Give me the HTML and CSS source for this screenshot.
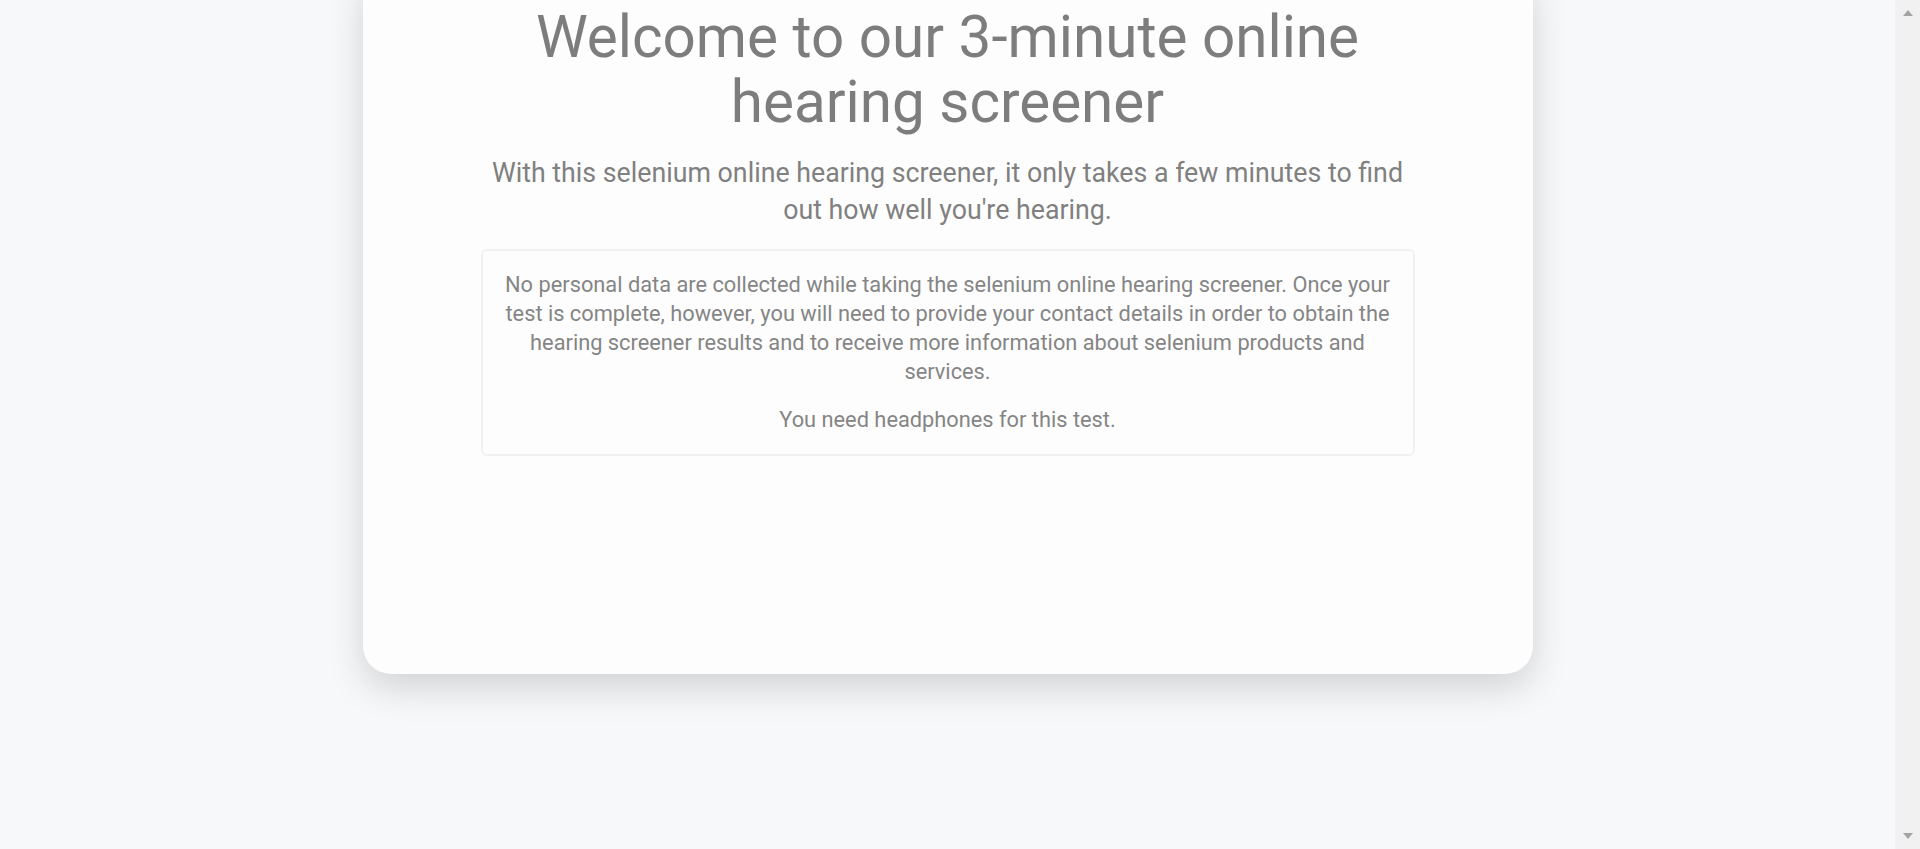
FILE: index.html
```html
<!DOCTYPE html>
<html lang="en">
<head>
<meta charset="utf-8">
<title>Online hearing screener</title>
<link rel="stylesheet" href="styles.css">
</head>
<body>
<div class="page">
  <div class="viewport">
    <main class="card">
      <div class="content">
        <h1 class="title">Welcome to our 3-minute online hearing screener</h1>
        <p class="subtitle">With this selenium online hearing screener, it only takes a few minutes to find out how well you're hearing.</p>
        <div class="notice">
          <p>No personal data are collected while taking the selenium online hearing screener. Once your test is complete, however, you will need to provide your contact details in order to obtain the hearing screener results and to receive more information about selenium products and services.</p>
          <p>You need headphones for this test.</p>
        </div>
      </div>
    </main>
  </div>
  <div class="scrollbar" aria-hidden="true">
    <span class="arrow arrow-up"></span>
    <span class="arrow arrow-down"></span>
  </div>
</div>
</body>
</html>
```
FILE: styles.css
```css
html,
body {
  margin: 0;
  height: 100%;
  overflow: hidden;
  background: #f7f8fa;
}
body {
  font-family: Roboto, "Liberation Sans", Arial, sans-serif;
  color: #808080;
}
.page {
  display: flex;
  height: 100vh;
}
.viewport {
  flex: 1;
  min-width: 0;
  overflow: hidden;
  background: #f7f8fa;
}
.scrollbar {
  width: 25px;
  flex: none;
  background: #f1f1f1;
  display: flex;
  flex-direction: column;
  justify-content: space-between;
  align-items: center;
  padding: 10px 0;
  box-sizing: border-box;
}
.arrow {
  width: 0;
  height: 0;
  border-left: 5.5px solid transparent;
  border-right: 5.5px solid transparent;
}
.arrow-up {
  border-bottom: 6px solid #a3a3a3;
}
.arrow-down {
  border-top: 6px solid #a3a3a3;
}
.card {
  width: 1170px;
  box-sizing: border-box;
  margin: -36px auto 0;
  padding: 41px 0 218px;
  background: #fdfdfd;
  border-radius: 28px;
  box-shadow: 0 14px 36px rgba(0, 0, 0, 0.15);
}
.content {
  width: 934px;
  margin: 0 auto;
  text-align: center;
}
.title {
  margin: 0;
  font-size: 58.4px;
  line-height: 65px;
  font-weight: 400;
  color: #7d7d7d;
}
.subtitle {
  margin: 20px 0 0;
  font-size: 26.75px;
  line-height: 37px;
  color: #808080;
}
.notice {
  margin-top: 20px;
  border: 2px solid #f1f1f1;
  border-radius: 6px;
  padding: 19px 18px 20px;
  font-size: 21.8px;
  line-height: 29px;
  color: #858585;
}
.notice p {
  margin: 0;
}
.notice p + p {
  margin-top: 19px;
}
```
